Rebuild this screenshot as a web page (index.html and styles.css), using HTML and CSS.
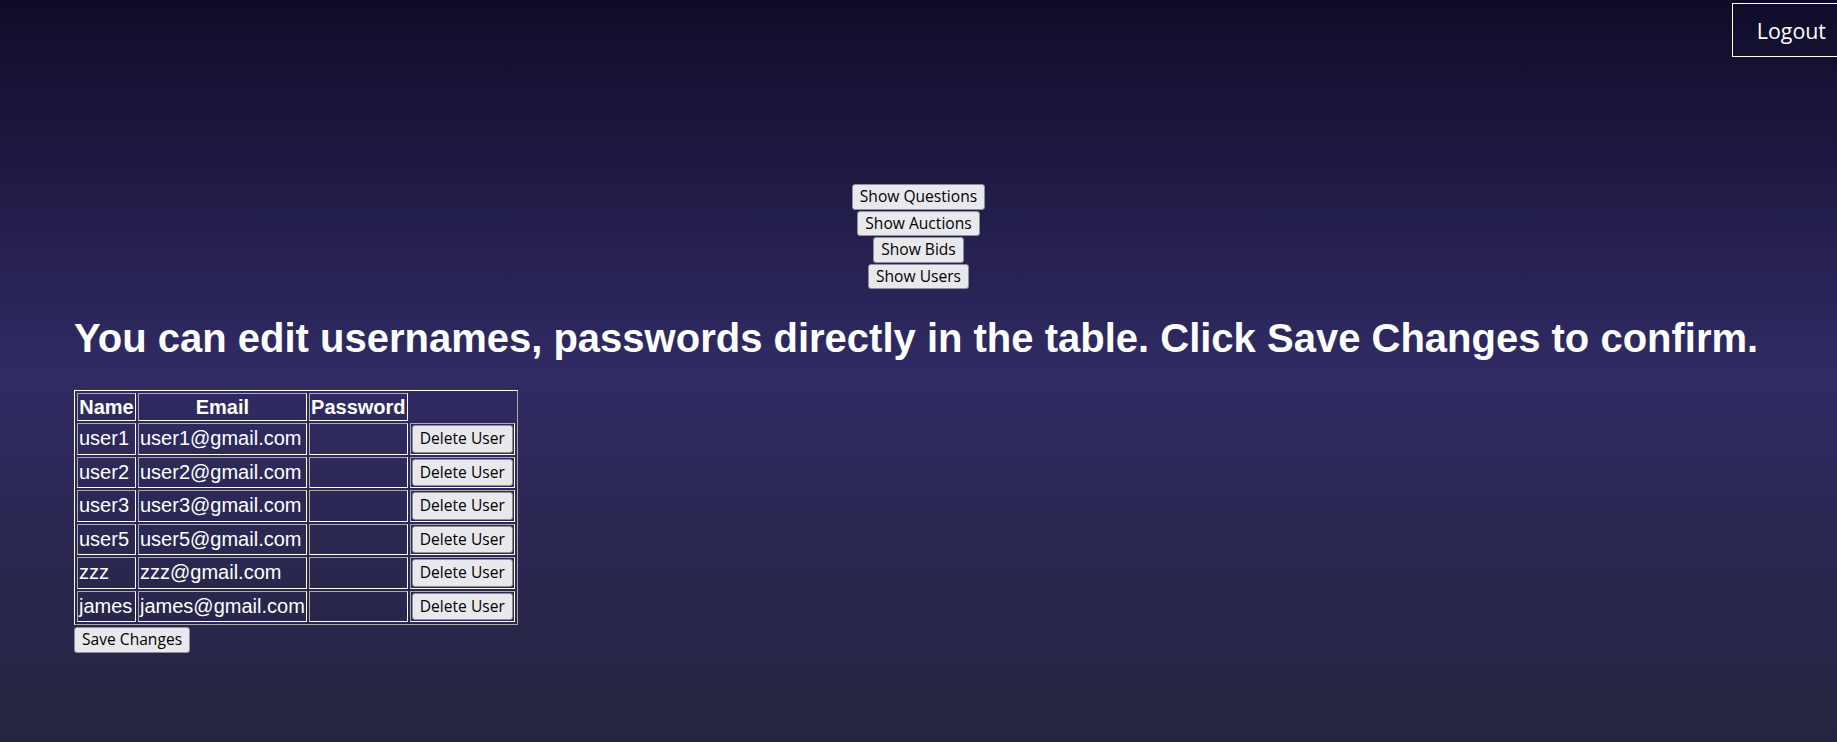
FILE: index.html
```html
<!DOCTYPE html>
<html lang="en">
<head>
<meta charset="utf-8">
<title>Admin</title>
<link rel="stylesheet" href="styles.css">
</head>
<body>
<header class="topbar">
  <button class="logout" type="button">Logout</button>
</header>
<main class="page">
  <nav class="menu">
    <button class="btn" type="button">Show Questions</button>
    <button class="btn" type="button">Show Auctions</button>
    <button class="btn" type="button">Show Bids</button>
    <button class="btn" type="button">Show Users</button>
  </nav>
  <h1 class="title">You can edit usernames, passwords directly in the table. Click Save Changes to confirm.</h1>
  <table class="users">
    <thead>
      <tr><th class="c-name">Name</th><th class="c-email">Email</th><th class="c-pass">Password</th><th class="empty"></th></tr>
    </thead>
    <tbody>
      <tr><td>user1</td><td>user1@gmail.com</td><td></td><td><button class="btn del" type="button">Delete User</button></td></tr>
      <tr><td>user2</td><td>user2@gmail.com</td><td></td><td><button class="btn del" type="button">Delete User</button></td></tr>
      <tr><td>user3</td><td>user3@gmail.com</td><td></td><td><button class="btn del" type="button">Delete User</button></td></tr>
      <tr><td>user5</td><td>user5@gmail.com</td><td></td><td><button class="btn del" type="button">Delete User</button></td></tr>
      <tr><td>zzz</td><td>zzz@gmail.com</td><td></td><td><button class="btn del" type="button">Delete User</button></td></tr>
      <tr><td>james</td><td>james@gmail.com</td><td></td><td><button class="btn del" type="button">Delete User</button></td></tr>
    </tbody>
  </table>
  <button class="btn save" type="button">Save Changes</button>
</main>
</body>
</html>
```

FILE: styles.css
```css
html {
  overflow-x: hidden;
}

body {
  margin: 0;
  min-height: 742px;
  background: linear-gradient(to bottom, #0f0c29 0%, #302b63 50%, #24243e 100%);
  color: #fff;
  font-family: "Liberation Sans", Arial, sans-serif;
  position: relative;
  overflow-x: hidden;
}

.topbar {
  position: absolute;
  top: 3px;
  right: -10px;
}

.logout {
  display: block;
  height: 54px;
  padding: 0 20px 0 24px;
  background: transparent;
  border: 1px solid #fff;
  color: #fff;
  font-family: "Open Sans", sans-serif;
  font-size: 21.4px;
}

.page {
  padding: 184px 74px 0;
}

.menu {
  display: flex;
  flex-direction: column;
  align-items: center;
  gap: 1px;
}

.btn {
  font-family: "Open Sans", sans-serif;
  font-size: 15.6px;
  line-height: 21.5px;
  color: #000;
  background: #e9e9ed;
  border: 1px solid #8f8f9d;
  border-radius: 3px;
  padding: 1px 7px;
  margin: 0;
}

.title {
  margin: 26px 0 29px;
  font-size: 40px;
  line-height: 46px;
  font-weight: bold;
  white-space: nowrap;
}

.users {
  border: 1px outset #fff;
  border-spacing: 2px;
  font-size: 20px;
}

.users th,
.users td {
  border: 1px inset #fff;
  padding: 1px;
  line-height: 23px;
}

.users th {
  padding: 2px 1px 1px;
}

.users th.c-name {
  width: 55px;
}

.users th.c-email {
  width: 164px;
}

.users th.c-pass {
  width: 95px;
}

.users th.empty {
  border: 0;
}

.del {
  padding: 2px 7px;
  line-height: 21.5px;
}

.save {
  display: block;
  margin-top: 2px;
}
```
